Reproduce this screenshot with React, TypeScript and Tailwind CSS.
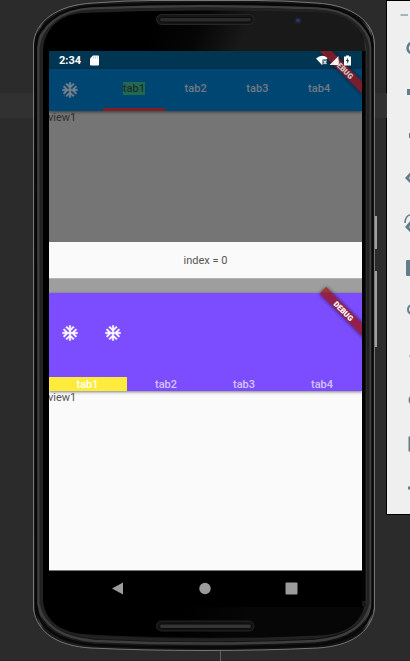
import React from 'react';

function PhoneFrame() {
  return (
    <svg className="absolute inset-0" width="410" height="661" viewBox="0 0 410 661" fill="none">
      <defs>
        <linearGradient id="edge" x1="33" x2="376" y1="0" y2="0" gradientUnits="userSpaceOnUse">
          <stop offset="0" stopColor="#747474" />
          <stop offset=".006" stopColor="#050505" />
          <stop offset=".012" stopColor="#151515" />
          <stop offset=".022" stopColor="#3d3d3d" />
          <stop offset=".03" stopColor="#1b1b1b" />
          <stop offset=".96" stopColor="#111" />
          <stop offset=".982" stopColor="#555" />
          <stop offset=".99" stopColor="#191919" />
          <stop offset="1" stopColor="#777" />
        </linearGradient>
        <linearGradient id="glass" x1="160" y1="10" x2="240" y2="45" gradientUnits="userSpaceOnUse">
          <stop offset="0" stopColor="#000" />
          <stop offset=".5" stopColor="#060606" />
          <stop offset="1" stopColor="#191919" />
        </linearGradient>
        <linearGradient id="lowerGlass" x1="180" y1="610" x2="240" y2="635" gradientUnits="userSpaceOnUse">
          <stop offset="0" stopColor="#000" />
          <stop offset="1" stopColor="#060606" />
        </linearGradient>
      </defs>
      <path d="M0 93H34V118H0zM375 93H387V118H375z" fill="#313131" />
      <path d="M0 660.5H410" stroke="#2d2428" />
      <path d="M220.5 650V661" stroke="#606060" />
      <path d="M375 216h2v33h-2zM375 271h2v76h-2z" fill="#a0a0a0" />
      <path d="M33.5 44C35 22 56 5 93 3Q125 .5 153 .5H256Q284 .5 316 3C353 5 374 22 374.500 44V609C371 633 350 646 318 648Q264 650.5 204 650.5T91 648C58 646 37 633 33.5 609Z" fill="url(#edge)" stroke="#777" />
      <path d="M35.5 45C38 25 58 8 94 6Q200 1 315 6C350 8 370 25 372.5 45V607C368 630 348 642 315 645Q204 650 94 645C60 642 40 630 36 607Z" stroke="#080808" strokeWidth="2.5" />
      <path d="M38.500 48C41 27 59 10 92 8.500Q204 4 317 8.500C350 10 368 27 370 48V604C366 626 347 638 315 641Q204 646 94 641C62 638 43 626 38.500 604Z" stroke="#3e3e3e" strokeWidth="2.500" />
      <path d="M41 48C43 29 61 12 92 11Q204 7 317 11C348 12 366 29 368 48V603C364 623 346 634 315 637Q204 643 94 637C64 634 45 623 41 603Z" stroke="#222" strokeWidth="3" />
      <path d="M43 52C44 31 56 15 82 13Q204 8 326 13C352 15 363 31 365.500 52V601C362 621 350 632 326 635Q204 641 82 634C57 631 45 619 43 600Z" fill="url(#glass)" />
      <path d="M43 52H180V606H365.500V601C362 621 350 632 326 635Q204 641 82 634C57 631 45 619 43 600Z" fill="url(#lowerGlass)" />
      <path d="M43 50H49V602H43z" fill="#000" />
      <path d="M362 51H365.500V601H362z" fill="#030303" />
      <rect x="156.500" y="14.500" width="97.500" height="10" rx="5" fill="#161616" stroke="#262626" />
      <rect x="159.500" y="17.500" width="92" height="4.500" rx="2.250" fill="#2b2b2b" stroke="#0b0b0b" />
      <rect x="156.500" y="621" width="97.500" height="10" rx="5" fill="#131313" stroke="#242424" />
      <rect x="159.500" y="624" width="92" height="4.500" rx="2.250" fill="#353535" stroke="#0b0b0b" />
      <circle cx="298" cy="20.500" r="4" fill="#1b1e2c" />
      <circle cx="298" cy="20.500" r="2" fill="#2f365a" />
    </svg>
  );
}

function Snowflake({ color }: { color: string }) {
  return (
    <svg width="18" height="18" viewBox="0 0 24 24">
      <path
        d="M22 11h-4.170l3.240-3.240-1.410-1.420L15 11h-2V9l4.660-4.660-1.420-1.410L13 6.170V2h-2v4.170L7.760 2.930 6.340 4.340 11 9v2H9L4.340 6.340 2.930 7.760 6.170 11H2v2h4.170l-3.240 3.240 1.410 1.420L9 13h2v2l-4.660 4.660 1.420 1.410L11 17.830V22h2v-4.170l3.240 3.240 1.420-1.410L13 15v-2h2l4.660 4.660 1.410-1.420L17.830 13H22v-2z"
        fill={color}
        stroke={color}
        strokeWidth="0.6"
      />
    </svg>
  );
}

function Ribbon({ dim = false }: { dim?: boolean }) {
  return (
    <svg className="absolute right-0 top-0 overflow-visible" width="50" height="58" viewBox="0 0 50 58">
      <g transform="translate(31.500 18) rotate(45)">
        <rect
          x="-29"
          y="-4.500"
          width="64"
          height="9"
          fill={dim ? '#741f2b' : '#92204a'}
          className="drop-shadow-[0_0_2px_rgba(0,0,0,.6)]"
        />
        {!dim && <path d="M-29-4.500h7.500l-7.500 7.500z" fill="#9d3539" />}
        <text y="2.800" textAnchor="middle" fontSize="7.600" fontWeight="900" fill={dim ? '#d5c7cb' : '#fff'} fontFamily="Roboto, sans-serif">
          DEBUG
        </text>
      </g>
    </svg>
  );
}

function StatusBar() {
  return (
    <div className="flex h-[18px] items-center bg-[#003652] pl-[10px] pr-[11px] text-white">
      <span className="pt-px text-[11px] font-bold leading-none">2:34</span>
      <svg className="ml-[9px]" width="9" height="11" viewBox="0 0 9 11">
        <path d="M3 .5H8Q9 .5 9 1.500V9.500Q9 10.500 8 10.500H1Q0 10.500 0 9.500V3.500Z" fill="#fff" />
        <path d="M3.500 1.500V3.500M5.500 1.500V3.500M7.500 1.500V3.500" stroke="#8fa8b4" strokeWidth=".6" />
      </svg>
      <svg className="relative z-10 ml-auto" width="35" height="11" viewBox="0 0 35 11">
        <path d="M0 3.500Q6-1.500 11.500 3L10.500 4.500H6.500V9.500L6 10Z" fill="#fff" />
        <path d="M7.500 5.500l3 3.500m0-3.500L7.500 9" stroke="#d9e2e7" strokeWidth="1.200" />
        <path d="M13.500 10L22.500 1V10Z" fill="#fff" opacity=".9" />
        <path d="M28 1.500H30V.5H33V1.500H35V10.500H28Z" fill="#fff" />
        <path d="M32.200 2.500L29.800 6H31.200L30.800 9L33.200 5.300H31.700Z" fill="#003652" />
      </svg>
    </div>
  );
}

function UpperApp() {
  return (
    <section className="relative h-[191px] overflow-hidden bg-[#757575]">
      <StatusBar />
      <header className="relative flex h-[42px] bg-[#004673] text-[11px] text-[#727b83] shadow-[0_1px_3px_rgba(0,0,0,.5)]">
        <div className="flex w-[54px] items-center pl-[12px]">
          <Snowflake color="#7b858c" />
        </div>
        <nav className="grid w-[247px] grid-cols-4 font-medium">
          <div className="flex items-center justify-center border-b-[3px] border-[#792126]">
            <span className="bg-[#23694e] leading-[13px] text-[#1a2f31]">tab1</span>
          </div>
          {['tab2', 'tab3', 'tab4'].map((tab) => (
            <div key={tab} className="flex items-center justify-center pb-px">{tab}</div>
          ))}
        </nav>
      </header>
      <p className="-ml-px text-[11px] leading-[13px] text-[#303030]">view1</p>
      <Ribbon dim />
    </section>
  );
}

function LowerApp() {
  return (
    <section className="relative h-[292px]">
      <div className="h-[15px] border-t border-[#b5b5b5] bg-[#9e9e9e]" />
      <header className="relative flex h-[98px] flex-col bg-[#7c4dff] shadow-[0_1px_3px_rgba(0,0,0,.5)]">
        <div className="flex h-[84px] items-center gap-[24.5px] pb-[4px] pl-[12px]">
          <Snowflake color="#fff" />
          <Snowflake color="#fff" />
        </div>
        <nav className="grid h-[14px] grid-cols-4 pr-px text-center text-[11px] font-medium leading-[15px] text-[#d2c4ff]">
          <div className="h-[14px] bg-[#ffeb3b] pr-px text-white">tab1</div>
          <div>tab2</div>
          <div>tab3</div>
          <div>tab4</div>
        </nav>
      </header>
      <p className="-ml-px text-[11px] leading-[13px] text-[#555]">view1</p>
      <div className="pointer-events-none absolute right-0 top-[15px]">
        <Ribbon />
      </div>
    </section>
  );
}

function NavigationBar() {
  return (
    <div className="flex h-[37px] items-center border-t border-[#747a77] bg-black pl-[62px]">
      <svg width="190" height="14" viewBox="0 0 190 14" fill="#9b9b9b">
        <path d="M1 6.500L12 .5V12.500Z" />
        <circle cx="94" cy="6.500" r="5.700" />
        <rect x="174.500" y=".5" width="12" height="12" rx="1" />
      </svg>
    </div>
  );
}

function EmulatorToolbar() {
  return (
    <aside className="h-[515px] w-[24px] overflow-hidden border-b border-l border-t border-black bg-[#efefef]">
      <svg width="23" height="513" viewBox="387 1 23 513" fill="none" stroke="#607d8b" strokeWidth="2">
        <path d="M400.500 15H408" stroke="#a5b5bd" />
        <circle cx="413" cy="48" r="5.500" strokeWidth="2.500" />
        <path d="M407 89H410V95H407zM409 133H411V138H409z" fill="#607d8b" stroke="none" />
        <path d="M405 178L411 171.500V175L409 178L411 181V184Z" fill="#607d8b" stroke="none" />
        <path d="M405 223Q405 216 411 214.500" strokeWidth="1.500" />
        <path d="M405 227L411 220V225L409 227L411 229V233Z" fill="#607d8b" stroke="none" />
        <rect x="406" y="260" width="8" height="16" rx="1" fill="#607d8b" stroke="none" />
        <circle cx="412.500" cy="309.500" r="4.500" />
        <path d="M409 356H411" stroke="#b3bdc2" />
        <circle cx="414" cy="400" r="4.500" />
        <rect x="409.500" y="437.500" width="12" height="13" />
        <path d="M408 488H411" strokeWidth="3" />
      </svg>
    </aside>
  );
}

export default function App() {
  return (
    <main className="relative flex h-[661px] w-[410px] items-start overflow-hidden bg-[#2b2b2b] font-[Roboto,sans-serif]">
      <PhoneFrame />
      <div className="relative w-[386px] shrink-0 pl-[49px] pt-[51px]">
        <div className="w-[313px] overflow-hidden bg-[#fafafa]">
          <UpperApp />
          <div className="flex h-[36px] items-center justify-center pt-[3px] text-[11px] text-[#555]">index = 0</div>
          <LowerApp />
          <NavigationBar />
        </div>
      </div>
      <EmulatorToolbar />
    </main>
  );
}
